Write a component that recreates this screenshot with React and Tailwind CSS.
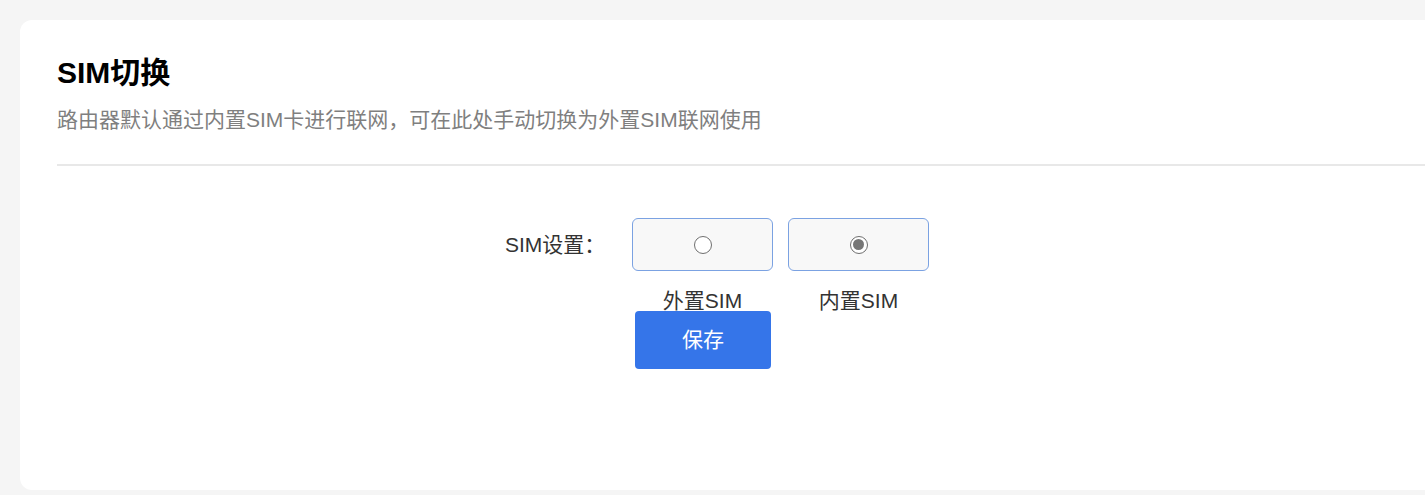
import React, { useState } from 'react';

const font = { fontFamily: '"Liberation Sans", "Noto Sans CJK SC", sans-serif' };

function Radio({ checked }) {
  return (
    <div className="flex h-[18px] w-[18px] shrink-0 items-center justify-center rounded-full border-[1.5px] border-[#6f6f6f] bg-white">
      {checked && <div className="h-[11px] w-[11px] rounded-full bg-[#767676]" />}
    </div>
  );
}

export default function App() {
  const [sim, setSim] = useState('inner');
  const options = [
    { key: 'outer', label: '外置SIM' },
    { key: 'inner', label: '内置SIM' },
  ];

  return (
    <div className="h-[495px] overflow-hidden bg-[#f5f5f5] pl-5 pt-5" style={font}>
      <div className="mr-[-20px] h-[470px] rounded-xl bg-white pl-[37px] pt-[35px]">
        <h1 className="text-[30px] font-bold leading-[36px] text-black">SIM切换</h1>
        <p className="mt-[14px] text-[21px] leading-[30px] text-[#7f7f7f]">
          路由器默认通过内置SIM卡进行联网，可在此处手动切换为外置SIM联网使用
        </p>
        <div className="mt-[29px] h-[2px] bg-[#e8e8e8]" />

        <div className="mt-[52px] flex pl-[448px]">
          <div className="flex h-[53px] w-[127px] items-center text-[21px] text-[#333]">SIM设置：</div>
          <div>
            <div className="flex gap-[15px]">
              {options.map((o) => (
                <div key={o.key} className="flex flex-col items-center">
                  <div
                    onClick={() => setSim(o.key)}
                    className="flex h-[53px] w-[141px] cursor-pointer items-center justify-center rounded-[6px] border border-[#7ba2e2] bg-[#f8f8f8]"
                  >
                    <Radio checked={sim === o.key} />
                  </div>
                  <span className="mt-[19px] text-[21px] leading-[21px] text-[#333]">{o.label}</span>
                </div>
              ))}
            </div>
            <button className="ml-[3px] flex h-[58px] w-[136px] items-center justify-center rounded-[4px] bg-[#3575e9] text-[21px] text-white">
              保存
            </button>
          </div>
        </div>
      </div>
    </div>
  );
}
